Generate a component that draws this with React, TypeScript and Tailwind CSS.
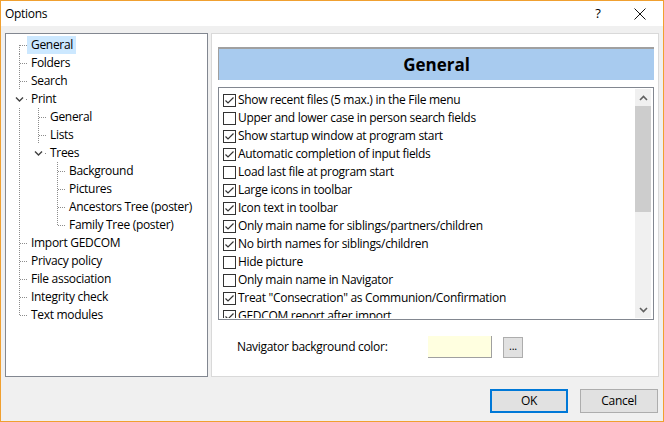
import React from 'react';

type TreeItem = {
  label: string;
  level: number;
  expander?: boolean;
  top?: boolean;
  bottom?: boolean;
  guides: boolean[];
  selected?: boolean;
};

const tree: TreeItem[] = [
  { label: 'General', level: 0, top: false, bottom: true, guides: [], selected: true },
  { label: 'Folders', level: 0, top: true, bottom: true, guides: [] },
  { label: 'Search', level: 0, top: true, bottom: true, guides: [] },
  { label: 'Print', level: 0, expander: true, guides: [] },
  { label: 'General', level: 1, top: true, bottom: true, guides: [true] },
  { label: 'Lists', level: 1, top: true, bottom: true, guides: [true] },
  { label: 'Trees', level: 1, expander: true, guides: [true] },
  { label: 'Background', level: 2, top: true, bottom: true, guides: [true, false] },
  { label: 'Pictures', level: 2, top: true, bottom: true, guides: [true, false] },
  { label: 'Ancestors Tree (poster)', level: 2, top: true, bottom: true, guides: [true, false] },
  { label: 'Family Tree (poster)', level: 2, top: true, bottom: false, guides: [true, false] },
  { label: 'Import GEDCOM', level: 0, top: true, bottom: true, guides: [] },
  { label: 'Privacy policy', level: 0, top: true, bottom: true, guides: [] },
  { label: 'File association', level: 0, top: true, bottom: true, guides: [] },
  { label: 'Integrity check', level: 0, top: true, bottom: true, guides: [] },
  { label: 'Text modules', level: 0, top: true, bottom: false, guides: [] },
];

const options: [string, boolean][] = [
  ['Show recent files (5 max.) in the File menu', true],
  ['Upper and lower case in person search fields', false],
  ['Show startup window at program start', true],
  ['Automatic completion of input fields', true],
  ['Load last file at program start', false],
  ['Large icons in toolbar', true],
  ['Icon text in toolbar', true],
  ['Only main name for siblings/partners/children', true],
  ['No birth names for siblings/children', true],
  ['Hide picture', false],
  ['Only main name in Navigator', false],
  ['Treat "Consecration" as Communion/Confirmation', true],
  ['GEDCOM report after import', true],
];

const DOT = '#8c8c8c';

const Guide = ({ on }: { on: boolean }) => (
  <svg width="19" height="18" className="shrink-0">
    {on && <line x1="9.5" y1="0" x2="9.5" y2="18" stroke={DOT} strokeDasharray="1 1" />}
  </svg>
);

const Connector = ({ item }: { item: TreeItem }) => {
  if (item.expander) {
    return (
      <svg width="17" height="18" className="shrink-0">
        <polyline points="6,7.5 9.5,11 13,7.5" fill="none" stroke="#404040" strokeWidth="1.4" />
        <rect x="16" y="9" width="1" height="1" fill={DOT} />
      </svg>
    );
  }
  return (
    <svg width="17" height="18" className="shrink-0">
      <line
        x1="9.5"
        y1={item.top ? 0 : 9}
        x2="9.5"
        y2={item.bottom ? 18 : 10}
        stroke={DOT}
        strokeDasharray="1 1"
      />
      <line x1="10" y1="9.5" x2="17" y2="9.5" stroke={DOT} strokeDasharray="1 1" />
    </svg>
  );
};

const Checkbox = ({ checked }: { checked: boolean }) => (
  <svg width="13" height="13" className="shrink-0">
    <rect x="0.5" y="0.5" width="12" height="12" fill="#fff" stroke="#333" />
    {checked && (
      <polyline points="2.5,6.5 5,9 10.5,3.5" fill="none" stroke="#333" strokeWidth="1.2" />
    )}
  </svg>
);

const App = () => {
  return (
    <div
      className="w-[664px] h-[422px] border border-[#f0a030] bg-[#f0f0f0] flex flex-col text-[12px] tracking-[-0.3px] text-black overflow-hidden"
      style={{ fontFamily: '"Open Sans", "Noto Sans", sans-serif' }}
    >
      {/* title bar */}
      <div className="h-[25px] bg-white flex items-center shrink-0">
        <span className="pl-[4px] flex-1">Options</span>
        <span className="w-[16px] text-center text-[13px] mr-[28px]">?</span>
        <svg width="12" height="12" className="mr-[17px]">
          <path d="M0.5 0.5 L11.5 11.5 M11.5 0.5 L0.5 11.5" stroke="#111" strokeWidth="1" />
        </svg>
      </div>

      {/* body */}
      <div className="flex pt-[7px] pl-[4px] pr-[4px] gap-[3px] h-[351px] shrink-0">
        {/* tree */}
        <div className="w-[203px] h-[344px] bg-white border border-[#828790] pt-[2px] pl-[4px]">
          {tree.map((item, i) => (
            <div key={i} className="flex h-[18px] items-center">
              {item.guides.map((g, j) => (
                <Guide key={j} on={g} />
              ))}
              <Connector item={item} />
              <span
                className={`h-[18px] flex items-center pl-[4px] pr-[3px] whitespace-nowrap ${
                  item.selected ? 'bg-[#cce8ff]' : ''
                }`}
              >
                {item.label}
              </span>
            </div>
          ))}
        </div>

        {/* right page */}
        <div className="w-[448px] h-[344px] bg-white border border-[#d9d9d9] pt-[13px] pl-[6px] pr-[4px] flex flex-col">
          <div className="h-[33px] bg-[#a8cbef] border-t-2 border-l border-[#a0a0a0] flex items-center justify-center font-bold text-[17px] tracking-normal">
            General
          </div>

          <div className="mt-[7px] h-[233px] border border-[#828790] p-[1px] flex overflow-hidden">
            <div className="flex-1 overflow-hidden pl-[3px] pt-[2px]">
              {options.map(([label, checked], i) => (
                <div key={i} className="flex items-center h-[18px] gap-[2px] whitespace-nowrap">
                  <Checkbox checked={checked} />
                  <span>{label}</span>
                </div>
              ))}
            </div>
            <div className="w-[16px] mr-[1px] bg-[#f0f0f0] flex flex-col">
              <div className="h-[17px] flex items-center justify-center">
                <svg width="9" height="6">
                  <polyline points="1,5 4.5,1.5 8,5" fill="none" stroke="#606060" strokeWidth="1.6" />
                </svg>
              </div>
              <div className="h-[106px] bg-[#cdcdcd]" />
              <div className="flex-1" />
              <div className="h-[17px] flex items-center justify-center">
                <svg width="9" height="6">
                  <polyline points="1,1 4.5,4.5 8,1" fill="none" stroke="#606060" strokeWidth="1.6" />
                </svg>
              </div>
            </div>
          </div>

          <div className="mt-[16px] flex items-center">
            <span className="ml-[19px] w-[191px]">Navigator background color:</span>
            <div className="w-[64px] h-[22px] bg-[#ffffe0] border-b border-r border-[#a0a0a0]" />
            <div className="ml-[11px] w-[20px] h-[21px] bg-[#e1e1e1] border border-[#adadad] flex items-center justify-center text-[11px] leading-none pb-[4px]">
              ...
            </div>
          </div>
        </div>
      </div>

      {/* buttons */}
      <div className="flex justify-end gap-[12px] pr-[5px] mt-[12px]">
        <button className="w-[78px] h-[24px] bg-[#e1e1e1] border-2 border-[#0078d7]">OK</button>
        <button className="w-[78px] h-[24px] bg-[#e1e1e1] border border-[#adadad]">Cancel</button>
      </div>
    </div>
  );
};

export default App;
